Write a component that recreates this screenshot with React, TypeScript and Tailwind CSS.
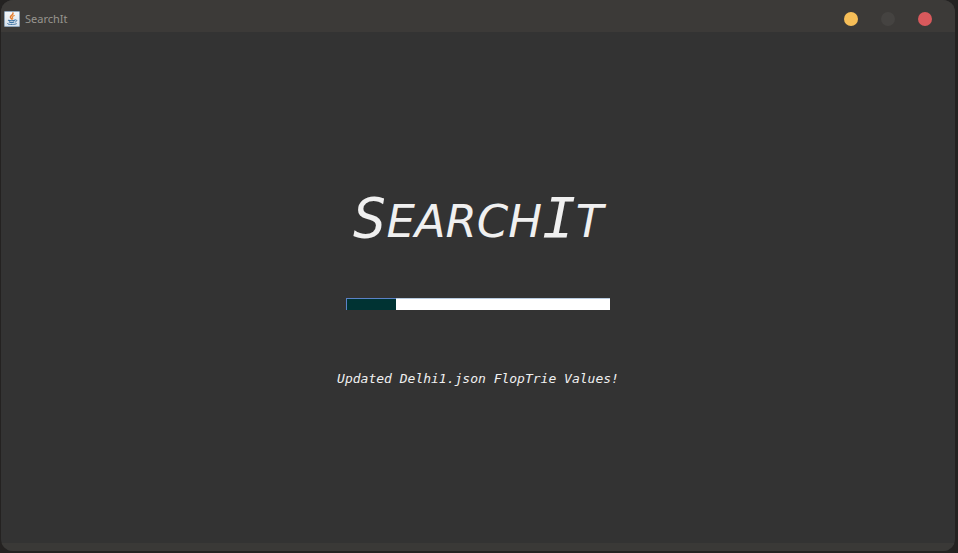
function JavaIcon() {
  return (
    <svg viewBox="0 0 16 16" className="size-4 shrink-0" aria-hidden="true">
      <defs>
        <linearGradient id="tile" x1="0" y1="0" x2="0" y2="1">
          <stop offset="0" stopColor="#f4f6f8" />
          <stop offset="1" stopColor="#d8e2ec" />
        </linearGradient>
      </defs>
      <rect x="0.5" y="0.5" width="15" height="15" rx="0.6" fill="url(#tile)" stroke="#8fa5ba" />
      <g fill="none" strokeLinecap="round">
        <path d="M9 2C9.8 4 6 4.4 6.4 6.1c.2.9.9 1.2 1.2 1.9" stroke="#e3792b" strokeWidth="1.5" />
        <path d="M10.3 4.6C8.6 5.3 8 5.9 8.6 6.7c.4.6.2 1-.2 1.4" stroke="#ea8a38" strokeWidth="1.1" />
        <path d="M4.4 9.3c1.2.6 5 .6 6.2 0M5.3 11.1c1.1.5 3.7.5 4.7 0" stroke="#3f74a3" strokeWidth="1.1" />
        <path d="M11 8.9c2.4-.6 2.3 1.4.4 2.1M3.4 12.6c-.6 1.2 7.1 1.3 9 .2" stroke="#3f74a3" strokeWidth="1" />
      </g>
    </svg>
  );
}

function TitleBar() {
  return (
    <header className="flex h-8 shrink-0 items-center bg-[#3c3a38] pt-1.5 pr-[23px] pl-[3px]">
      <JavaIcon />
      <span className="ml-[5px] font-['Noto_Sans',sans-serif] text-[11px] leading-4 text-[#98958f]">SearchIt</span>
      <div className="ml-auto flex items-center gap-[23px]">
        <button type="button" aria-label="Minimize" className="size-3.5 rounded-full bg-[#f6be58]" />
        <button type="button" aria-label="Maximize" disabled className="size-3.5 rounded-full bg-[#454341]" />
        <button type="button" aria-label="Close" className="size-3.5 rounded-full bg-[#d9595c]" />
      </div>
    </header>
  );
}

export default function App() {
  return (
    <div className="flex min-h-screen flex-col bg-[#242221] pr-[3px] pb-[2px] pl-px">
      <div className="flex grow flex-col overflow-hidden rounded-xl bg-[#333333]">
        <TitleBar />
        <main className="flex grow flex-col items-center pt-[146px]">
          <h1 className="font-['DejaVu_Sans_Mono',monospace] text-[56px] leading-[80px] text-[#f0f0f0] italic">
            S<span className="font-['DejaVu_Sans',sans-serif] text-[45px] uppercase">earch</span>I
            <span className="font-['DejaVu_Sans',sans-serif] text-[45px] uppercase">t</span>
          </h1>
          <progress
            aria-label="Loading"
            value={19}
            max={100}
            className="mt-9 block h-3 w-[264px] appearance-none border-0 [&::-webkit-progress-bar]:bg-white [&::-webkit-progress-bar]:shadow-[inset_0_1px_0_#b8cbe0] [&::-webkit-progress-value]:bg-[#003333] [&::-webkit-progress-value]:shadow-[inset_1px_1px_0_#5b82c8]"
          />
          <p className="mt-[59px] font-['DejaVu_Sans_Mono',monospace] text-[13px] leading-5 text-[#f0f0f0] italic">
            Updated Delhi1.json FlopTrie Values!
          </p>
        </main>
        <footer className="h-2 shrink-0 bg-[#3a3937]" />
      </div>
    </div>
  );
}
